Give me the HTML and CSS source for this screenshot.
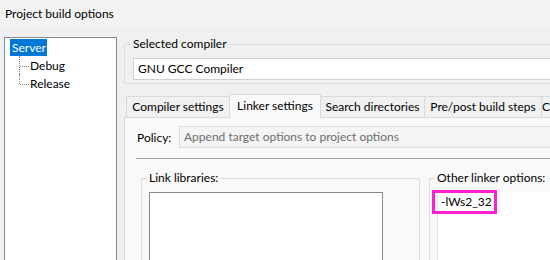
FILE: index.html
```html
<!DOCTYPE html>
<html>
<head>
  <title>Project build options</title>
  <link rel="stylesheet" href="styles.css">
</head>
<body>
  <div class="titlebar">Project build options</div>

  <div class="main">
    <div class="tree">
      <div class="node root"><span class="selected">Server</span></div>
      <div class="node child">Debug</div>
      <div class="node child last">Release</div>
    </div>

    <div class="right">
      <fieldset class="group compiler">
        <legend>Selected compiler</legend>
        <div class="combo">GNU GCC Compiler</div>
      </fieldset>

      <div class="tabs">
        <div class="tab" style="width:104px">Compiler settings</div>
        <div class="tab active" style="width:92px">Linker settings</div>
        <div class="tab" style="width:105px">Search directories</div>
        <div class="tab" style="width:118px">Pre/post build steps</div>
        <div class="tab" style="width:60px">Custom variables</div>
      </div>

      <div class="panel">
        <div class="policy">
          <span class="policy-label">Policy:</span>
          <div class="combo disabled">Append target options to project options</div>
        </div>
        <div class="separator"></div>

        <div class="columns">
          <fieldset class="group libs">
            <legend>Link libraries:</legend>
            <div class="listbox"></div>
          </fieldset>
          <fieldset class="group other">
            <legend>Other linker options:</legend>
            <div class="textbox">
              <div class="mark">-lWs2_32</div>
            </div>
          </fieldset>
        </div>
      </div>
    </div>
  </div>
</body>
</html>
```

FILE: styles.css
```css
body {
  margin: 0;
  width: 550px;
  height: 260px;
  overflow: hidden;
  background-color: #f0f0f0;
  font-family: Lato, "Open Sans", sans-serif;
  font-size: 12px;
  color: #000;
}

.titlebar {
  height: 29px;
  line-height: 28px;
  padding-left: 5px;
  background-color: #f2f2f2;
}

.main {
  display: flex;
  align-items: flex-start;
  padding: 7px 0 0 4px;
  gap: 7px;
}

/* tree */
.tree {
  flex: none;
  width: 111px;
  height: 240px;
  margin-top: 1px;
  background-color: #fff;
  border: 1px solid #828790;
  padding-top: 1px;
}

.node {
  position: relative;
  height: 18px;
  line-height: 17px;
}

.root {
  padding-left: 5px;
}

.selected {
  display: inline-block;
  height: 17px;
  padding: 0 1px 0 2px;
  background-color: #0078d7;
  color: #fff;
}

.child {
  padding-left: 25px;
}

.child::before {
  content: "";
  position: absolute;
  left: 14px;
  top: -1px;
  width: 0;
  height: 18px;
  border-left: 1px dotted #808080;
}

.child.last::before {
  height: 10px;
}

.child::after {
  content: "";
  position: absolute;
  left: 15px;
  top: 9px;
  width: 9px;
  border-top: 1px dotted #808080;
}

/* right side */
.right {
  flex: none;
  width: 470px;
}

.group {
  margin: 0;
  min-width: 0;
  border: 1px solid #dcdcdc;
  border-radius: 2px;
}

.group legend {
  padding: 0 2px;
  margin-left: -2px;
  line-height: 16px;
}

.compiler {
  padding: 6px 0 3px 8px;
}

.combo {
  height: 20px;
  line-height: 20px;
  padding-left: 4px;
  background-color: #fff;
  border: 1px solid #d0d0d0;
}

.tabs {
  display: flex;
  align-items: flex-end;
  height: 23px;
  margin-top: 10px;
  padding-left: 2px;
  white-space: nowrap;
}

.tab {
  flex: none;
  box-sizing: border-box;
  height: 21px;
  line-height: 20px;
  text-align: center;
  overflow: hidden;
  background-color: #f0f0f0;
  border: 1px solid #d9d9d9;
  border-bottom: none;
  margin-right: -1px;
}

.tab.active {
  height: 24px;
  margin-bottom: -1px;
  line-height: 22px;
  background-color: #f9f9f9;
  position: relative;
}

.panel {
  height: 150px;
  background-color: #f9f9f9;
  border-top: 1px solid #d9d9d9;
  border-left: 1px solid #d9d9d9;
  padding: 8px 0 0 11px;
}

.policy {
  display: flex;
  align-items: center;
}

.policy-label {
  width: 42px;
  padding-left: 1px;
}

.combo.disabled {
  flex: 1;
  background-color: #f4f4f4;
  border-color: #dcdcdc;
  color: #6d6d6d;
}

.separator {
  margin-top: 10px;
  border-top: 1px solid #a0a0a0;
}

.columns {
  display: flex;
  gap: 9px;
  margin-top: 11px;
  padding-left: 5px;
}

.libs {
  flex: none;
  width: 270px;
  height: 100px;
  padding: 6px 0 0 7px;
}

.listbox {
  width: 232px;
  height: 90px;
  background-color: #fff;
  border: 1px solid #828790;
}

.other {
  flex: 1;
  height: 100px;
  padding: 6px 0 0 7px;
}

.textbox {
  position: relative;
  height: 90px;
  background-color: #fff;
  border-left: 1px solid #e6e6e6;
}

.mark {
  position: absolute;
  left: -6px;
  top: -2px;
  width: 53px;
  height: 18px;
  line-height: 18px;
  padding-left: 6px;
  border: 3px solid #ff1ed2;
}
```
